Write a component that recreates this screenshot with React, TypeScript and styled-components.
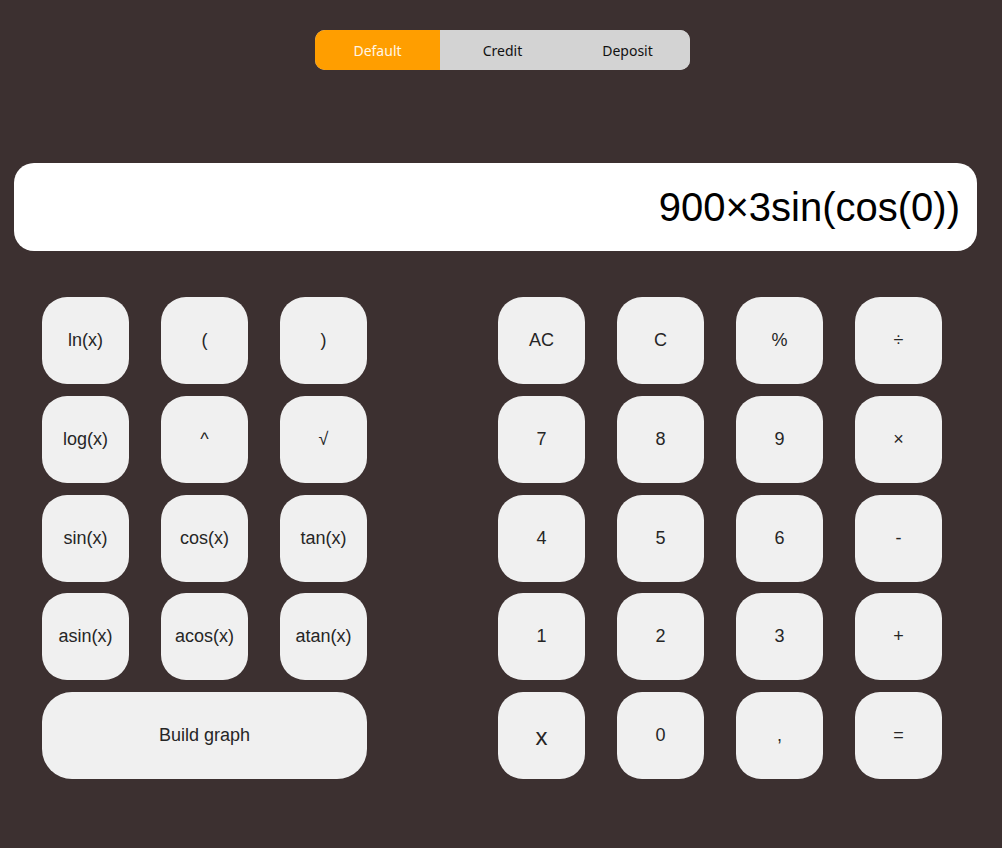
import React from "react";
import styled, { createGlobalStyle } from "styled-components";

const Global = createGlobalStyle`
  html, body {
    margin: 0;
    padding: 0;
    background: #3c3030;
    min-height: 100%;
  }
  body {
    font-family: "Liberation Sans", Arial, sans-serif;
  }
`;

const Page = styled.div`
  min-height: 848px;
  box-sizing: border-box;
  padding: 30px 25px 0 14px;
  display: flex;
  flex-direction: column;
`;

const TabsRow = styled.div`
  display: flex;
  justify-content: center;
  padding-left: 14px;
`;

const Tabs = styled.div`
  display: flex;
  width: 375px;
  height: 40px;
  border-radius: 10px;
  overflow: hidden;
  background: #d3d3d3;
`;

const Tab = styled.button<{ $active?: boolean }>`
  flex: 1;
  border: none;
  margin: 0;
  padding: 0;
  font-family: "Noto Sans", "Open Sans", sans-serif;
  font-size: 14px;
  background: ${(p) => (p.$active ? "#ff9e00" : "#d3d3d3")};
  color: ${(p) => (p.$active ? "#fff6e6" : "#111")};
  cursor: pointer;
`;

const Display = styled.div`
  margin-top: 93px;
  height: 88px;
  background: #fff;
  border-radius: 20px;
  display: flex;
  align-items: center;
  justify-content: flex-end;
  padding: 0 17px;
  font-family: "Liberation Sans", Arial, sans-serif;
  font-size: 40px;
  color: #000;
`;

const Keypads = styled.div`
  margin-top: 45px;
  display: flex;
  padding-left: 28px;
  gap: 131px;
`;

const Pad = styled.div<{ $cols: number }>`
  display: grid;
  grid-template-columns: repeat(${(p) => p.$cols}, 87px);
  grid-auto-rows: 87px;
  column-gap: 32px;
  row-gap: 11.75px;
  padding-top: 1px;
`;

const Key = styled.button<{ $wide?: boolean; $big?: boolean }>`
  grid-column: ${(p) => (p.$wide ? "span 3" : "auto")};
  border: none;
  margin: 0;
  padding: 0;
  border-radius: ${(p) => (p.$wide ? "30px" : "25px")};
  background: #f0f0f0;
  color: #262626;
  font-family: "Liberation Sans", Arial, sans-serif;
  font-size: ${(p) => (p.$big ? "24px" : "18px")};
  padding-top: ${(p) => (p.$big ? "3px" : "0")};
  cursor: pointer;
`;

const leftKeys = [
  "ln(x)", "(", ")",
  "log(x)", "^", "√",
  "sin(x)", "cos(x)", "tan(x)",
  "asin(x)", "acos(x)", "atan(x)",
];

const rightKeys = [
  "AC", "C", "%", "÷",
  "7", "8", "9", "×",
  "4", "5", "6", "-",
  "1", "2", "3", "+",
  "x", "0", ",", "=",
];

export default function App() {
  return (
    <>
      <Global />
      <Page>
        <TabsRow>
          <Tabs>
            <Tab $active>Default</Tab>
            <Tab>Credit</Tab>
            <Tab>Deposit</Tab>
          </Tabs>
        </TabsRow>
        <Display>900×3sin(cos(0))</Display>
        <Keypads>
          <Pad $cols={3}>
            {leftKeys.map((k) => (
              <Key key={k}>{k}</Key>
            ))}
            <Key $wide>Build graph</Key>
          </Pad>
          <Pad $cols={4}>
            {rightKeys.map((k) => (
              <Key key={k} $big={k === "x"}>
                {k}
              </Key>
            ))}
          </Pad>
        </Keypads>
      </Page>
    </>
  );
}
